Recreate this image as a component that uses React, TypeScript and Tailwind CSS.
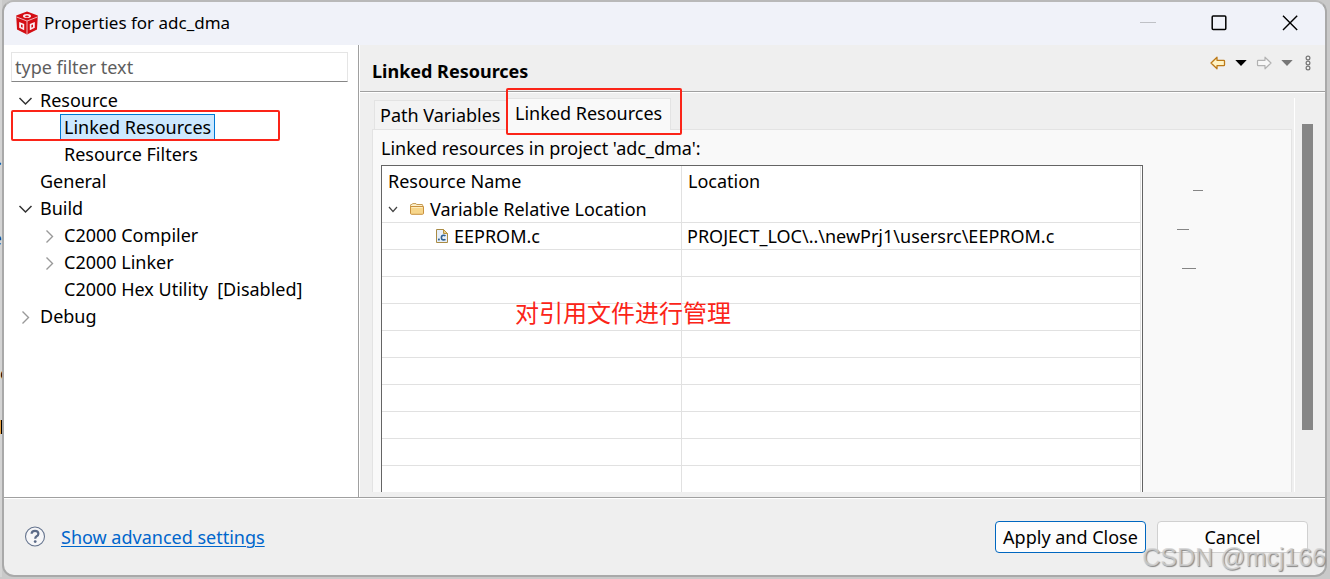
import React from "react";

type TreeItem = { label: string; level: number; state?: "open" | "closed"; selected?: boolean };

const tree: TreeItem[] = [
  { label: "Resource", level: 1, state: "open" },
  { label: "Linked Resources", level: 2, selected: true },
  { label: "Resource Filters", level: 2 },
  { label: "General", level: 1 },
  { label: "Build", level: 1, state: "open" },
  { label: "C2000 Compiler", level: 2, state: "closed" },
  { label: "C2000 Linker", level: 2, state: "closed" },
  { label: "C2000 Hex Utility\u00a0 [Disabled]", level: 2 },
  { label: "Debug", level: 1, state: "closed" },
];

function Twisty({ state }: { state?: "open" | "closed" }) {
  return (
    <svg className="size-4 shrink-0" viewBox="0 0 16 16" fill="none" aria-hidden="true">
      {state === "open" && <path d="M1.5 5 7.5 11 13.5 5" stroke="#333" strokeWidth="1.5" />}
      {state === "closed" && <path d="M4.5 2.5 10.5 8.5 4.5 14.5" stroke="#999" strokeWidth="1.4" />}
    </svg>
  );
}

function CubeIcon() {
  return (
    <svg className="size-6" viewBox="0 0 24 24" aria-hidden="true">
      <path d="M12 .4 22.8 4.6 22 18.6 12 23.6 2 18.6 1.2 4.6Z" fill="#d40e14" />
      <path d="M1.6 6 12 10 22.4 6M12 10V23" stroke="#f0b6bb" strokeWidth="1" fill="none" />
      <ellipse cx="12" cy="5" rx="4" ry="2" fill="#fbeef2" />
      <ellipse cx="12" cy="5.4" rx="1.9" ry=".9" fill="#d40e14" />
      <path d="M4.2 11 9.2 13v6.2l-5-2.4Z" fill="#fbeef2" />
      <path d="M19.8 11 14.8 13v6.2l5-2.4Z" fill="#fbeef2" />
      <path d="M6 13.4l1.6.6v2.8L6 16.1ZM18 13.4l-1.6.6v2.8l1.6-.7Z" fill="#d40e14" />
    </svg>
  );
}

function FolderIcon() {
  return (
    <svg className="h-3 w-3.5 shrink-0" viewBox="0 0 14 12" aria-hidden="true">
      <path d="M.5 10V2.2Q.5 1.5 1.2 1.5H2L2.6.6H6L6.6 1.5H12Q12.7 1.5 12.7 2.2V3" fill="#fdf0cb" stroke="#c49a52" />
      <path d="M.5 3.5H13.5V10.2Q13.5 11.3 12.5 11.3H1.5Q.5 11.3.5 10.2Z" fill="#f7d68b" stroke="#c9913f" />
      <path d="M1.5 4.5h11" stroke="#fdecc0" />
    </svg>
  );
}

function CFileIcon() {
  return (
    <svg className="h-3.5 w-3 shrink-0" viewBox="0 0 12 14" aria-hidden="true">
      <path d="M.5.5H7.5L11.5 4.5V13.5H.5Z" fill="#e6eff9" stroke="#a98b45" />
      <path d="M7.5.5V4.5H11.5Z" fill="#e7ce8c" stroke="#b8953f" />
      <path d="M9.5 6.9Q8.8 6.3 7.6 6.3 5.4 6.3 5.4 8.6T7.6 10.9Q8.8 10.9 9.5 10.3" stroke="#2f6191" strokeWidth="1.6" fill="none" />
      <rect x="2" y="9.6" width="1.8" height="1.8" fill="#2f6191" />
    </svg>
  );
}

function ArrowIcon({ forward }: { forward?: boolean }) {
  return forward ? (
    <svg className="h-3.5 w-4" viewBox="0 0 16 14" aria-hidden="true">
      <path d="M15 7 9 1.2V4.3H2.2Q1.5 4.3 1.5 5V9Q1.5 9.7 2.2 9.7H9V12.8Z" fill="#f7f7f7" stroke="#b2b2b2" strokeWidth="1.2" strokeLinejoin="round" />
    </svg>
  ) : (
    <svg className="h-3.5 w-4" viewBox="0 0 16 14" aria-hidden="true">
      <path d="M1 7 7 1.2V4.3H13.8Q14.5 4.3 14.5 5V9Q14.5 9.7 13.8 9.7H7V12.8Z" fill="#fff3c4" stroke="#bd7a18" strokeWidth="1.3" strokeLinejoin="round" />
    </svg>
  );
}

function DropIcon({ dim }: { dim?: boolean }) {
  return (
    <svg className="h-1.5 w-3" viewBox="0 0 12 6" aria-hidden="true">
      <path d="M.3 0H11.7L6 6Z" fill={dim ? "#777" : "#000"} />
    </svg>
  );
}

const emptyRows = Array.from({ length: 9 }, (_, i) => i);

export default function App() {
  return (
    <div className="relative flex h-screen min-h-[360px] overflow-hidden bg-[#c9c9c9] pr-[3px] pb-0.5 font-['Noto_Sans','Noto_Sans_CJK_SC',sans-serif] text-lg leading-[27px] text-black">
      <div className="relative w-0.5 shrink-0 overflow-hidden bg-[#d4d4d4]" aria-hidden="true">
        <span className="absolute top-[145px] right-0 text-[#123a80]">.</span>
        <span className="absolute top-[225px] right-0 text-[#123a80]">e</span>
        <span className="absolute top-[360px] left-0">o</span>
        <span className="absolute top-[420px] left-0 h-3.5 w-px bg-[#e8a040]" />
        <span className="absolute top-[420px] left-px h-3.5 w-px bg-black" />
      </div>

      <div className="flex min-w-0 flex-1 flex-col overflow-hidden rounded-xl border-2 border-[#a9a9a9] border-t-[#b9b9b9] bg-[#efefef]">
        <header className="flex h-[43px] shrink-0 items-center bg-[#f0f2f9] pb-0.5 pl-[11px]">
          <CubeIcon />
          <h1 className="ml-[5px] flex-1 text-[17px]">Properties for adc_dma</h1>
          <div className="flex items-center gap-[55px] pr-[27px]">
            <button aria-label="Minimize" className="flex size-4 items-center">
              <span className="h-px w-full bg-[#bfc1c6]" />
            </button>
            <button aria-label="Maximize" className="size-4">
              <svg viewBox="0 0 16 16" className="size-4" fill="none"><rect x="1.2" y="1" width="13.6" height="13.6" rx="1" stroke="#000" strokeWidth="1.5" /></svg>
            </button>
            <button aria-label="Close" className="size-4">
              <svg viewBox="0 0 16 16" className="size-4" fill="none"><path d="M1 .8 15.2 15M15.2.8 1 15" stroke="#000" strokeWidth="1.4" /></svg>
            </button>
          </div>
        </header>

        <div className="flex min-h-0 flex-1">
          <aside className="w-[355px] shrink-0 border-r border-[#a0a0a0] bg-white pt-[7px]">
            <input
              aria-label="Filter"
              placeholder="type filter text"
              className="ml-[7px] block h-[30px] w-[337px] border border-[#e5e5e5] border-b-[#868686] px-[3px] outline-none placeholder:text-[#5e5e5e]"
            />
            <ul role="tree" aria-label="Property pages" className="mt-[5px]">
              {tree.map((item) => (
                <li
                  key={item.label}
                  role="treeitem"
                  aria-level={item.level}
                  aria-selected={!!item.selected}
                  className={item.level === 1 ? "relative flex h-[27px] items-center pl-3.5" : "relative flex h-[27px] items-center pl-[38px]"}
                >
                  <Twisty state={item.state} />
                  <span
                    className={
                      item.selected
                        ? "ml-0.5 flex h-full items-center border border-[#0078d4] bg-[#cce8ff] px-[3px]"
                        : "ml-0.5 border border-transparent px-[3px]"
                    }
                  >
                    {item.label}
                  </span>
                  {item.selected && (
                    <span className="pointer-events-none absolute -top-1 left-[7px] h-[31px] w-[269px] rounded-xs border-2 border-[#fb2418]" />
                  )}
                </li>
              ))}
            </ul>
          </aside>

          <main className="flex min-w-0 flex-1 flex-col border-l border-white">
            <div className="flex h-[47px] shrink-0 items-center border-b border-[#a0a0a0] pt-1.5 pl-3">
              <h2 className="flex-1 font-bold">Linked Resources</h2>
              <div className="flex items-center gap-[9px] pr-[13px] pb-4">
                <button aria-label="Back"><ArrowIcon /></button>
                <button aria-label="Back history" className="flex"><DropIcon /></button>
                <button aria-label="Forward"><ArrowIcon forward /></button>
                <button aria-label="Forward history" className="flex"><DropIcon dim /></button>
                <button aria-label="Menu" className="ml-0.5">
                  <svg className="h-4 w-2" viewBox="0 0 8 16" fill="none" stroke="#777" strokeWidth="1.2">
                    <circle cx="4" cy="3" r="1.9" /><circle cx="4" cy="8" r="1.9" /><circle cx="4" cy="13" r="1.9" />
                  </svg>
                </button>
              </div>
            </div>

            <div className="flex min-h-0 flex-1 border-t border-white pt-[5px] pb-[5px] pl-3">
              <div className="flex min-h-0 min-w-0 flex-1 flex-col">
                <div role="tablist" className="flex h-[31px] shrink-0 items-end pl-0.5">
                  <button role="tab" aria-selected="false" className="h-[29px] w-[133px] border border-b-0 border-[#e3e3e3] bg-[#f3f3f3] pl-[5px] text-left whitespace-nowrap">
                    Path Variables
                  </button>
                  <div className="relative h-full w-[164px]">
                    <button role="tab" aria-selected="true" className="relative z-10 -mb-px h-8 w-full border border-b-0 border-[#e3e3e3] bg-[#f9f9f9] pb-0.5 pl-[7px] text-left whitespace-nowrap">
                      Linked Resources
                    </button>
                    <span className="pointer-events-none absolute -top-[10px] -left-px z-20 h-[47px] w-[176px] rounded-xs border-2 border-[#fb2418]" />
                  </div>
                </div>

                <section className="flex min-h-0 flex-1 flex-col border border-b-0 border-[#e3e3e3] bg-[#f9f9f9] pt-[5px] pl-2">
                  <p className="h-[30px] shrink-0">Linked resources in project 'adc_dma':</p>
                  <div className="flex min-h-0 flex-1">
                    <div className="relative min-w-0 flex-1 overflow-hidden border border-b-0 border-[#646464] bg-white pr-px">
                      <table className="w-full table-fixed border-separate border-spacing-0 text-left">
                        <colgroup>
                          <col className="w-[300px]" />
                          <col />
                        </colgroup>
                        <thead>
                          <tr className="h-[30px]">
                            <th className="border-r border-[#e1e1e1] pl-1.5 font-normal">Resource Name</th>
                            <th className="border-r border-[#e1e1e1] pl-1.5 font-normal">Location</th>
                          </tr>
                        </thead>
                        <tbody>
                          <tr className="h-[27px]">
                            <td className="border-r border-b border-[#e1e1e1]">
                              <div className="flex h-[26px] items-center pl-[5px]">
                                <svg className="size-3 shrink-0" viewBox="0 0 12 12" fill="none"><path d="M2 4 6 8.5 10 4" stroke="#444" strokeWidth="1.2" /></svg>
                                <span className="ml-[11px]"><FolderIcon /></span>
                                <span className="ml-1.5 whitespace-nowrap">Variable Relative Location</span>
                              </div>
                            </td>
                            <td className="border-r border-b border-[#e1e1e1]" />
                          </tr>
                          <tr className="h-[27px]">
                            <td className="border-r border-b border-[#e1e1e1]">
                              <div className="flex h-[26px] items-center pl-[54px]">
                                <CFileIcon />
                                <span className="ml-1.5">EEPROM.c</span>
                              </div>
                            </td>
                            <td className="border-r border-b border-[#e1e1e1] pl-[5px] whitespace-nowrap">
                              <div className="h-[26px] leading-[26px]">PROJECT_LOC\..\newPrj1\usersrc\EEPROM.c</div>
                            </td>
                          </tr>
                          {emptyRows.map((row) => (
                            <tr key={row} className="h-[27px]">
                              <td className="border-r border-b border-[#e1e1e1]" />
                              <td className="border-r border-b border-[#e1e1e1]" />
                            </tr>
                          ))}
                        </tbody>
                      </table>
                      <p className="absolute top-32 left-[133px] font-['Noto_Sans_CJK_SC',sans-serif] text-2xl leading-9 whitespace-nowrap text-[#fb2418]">对引用文件进行管理</p>
                    </div>
                    <div className="flex w-[148px] shrink-0 flex-col gap-[38px] pt-[25px]">
                      <button aria-label="Edit" className="ml-[50px] h-px w-2.5 bg-[#858585]" />
                      <button aria-label="Convert" className="ml-[34px] h-px w-3 bg-[#858585]" />
                      <button aria-label="Delete" className="ml-[39px] h-px w-3.5 bg-[#858585]" />
                    </div>
                  </div>
                </section>
              </div>
              <div className="ml-0.5 w-[31px] shrink-0 border-l border-white pt-[26px] pl-[7px]">
                <div className="h-[306px] w-[11px] bg-[#868686]" />
              </div>
            </div>
          </main>
        </div>

        <footer className="flex h-[78px] shrink-0 items-center border-t border-[#a0a0a0] pr-[17px] pl-5 shadow-[inset_0_1px_0_#fff]">
          <button aria-label="Help">
            <svg className="size-[22px]" viewBox="0 0 22 22" fill="none">
              <circle cx="11" cy="10.5" r="9.5" fill="#f6f6f8" stroke="#66758f" strokeWidth="1.1" />
              <path d="M7.6 7.8Q7.7 4.8 11 4.8T14.4 7.7Q14.4 9.3 12.6 10.3 11.2 11.1 11.2 12.8" stroke="#5b6a87" strokeWidth="2.2" />
              <circle cx="11.2" cy="15.6" r="1.4" fill="#5b6a87" />
            </svg>
          </button>
          <a href="#advanced" className="ml-[15px] pt-0.5 text-[#0066cc] underline decoration-1 underline-offset-2">Show advanced settings</a>
          <div className="ml-auto flex gap-[11px]">
            <button className="h-8 w-[151px] rounded border border-[#0067c0] bg-[#fdfdfd] pt-0.5 whitespace-nowrap">Apply and Close</button>
            <button className="h-8 w-[151px] rounded border border-[#d0d0d0] bg-[#fdfdfd] pt-0.5">Cancel</button>
          </div>
        </footer>
      </div>

      <p className="pointer-events-none absolute right-1 bottom-1.5 font-['Liberation_Sans',sans-serif] text-[25px] leading-8 text-[#d2d2d2]/80 [text-shadow:1px_1px_1px_#888]">
        CSDN @mcj166
      </p>
    </div>
  );
}
